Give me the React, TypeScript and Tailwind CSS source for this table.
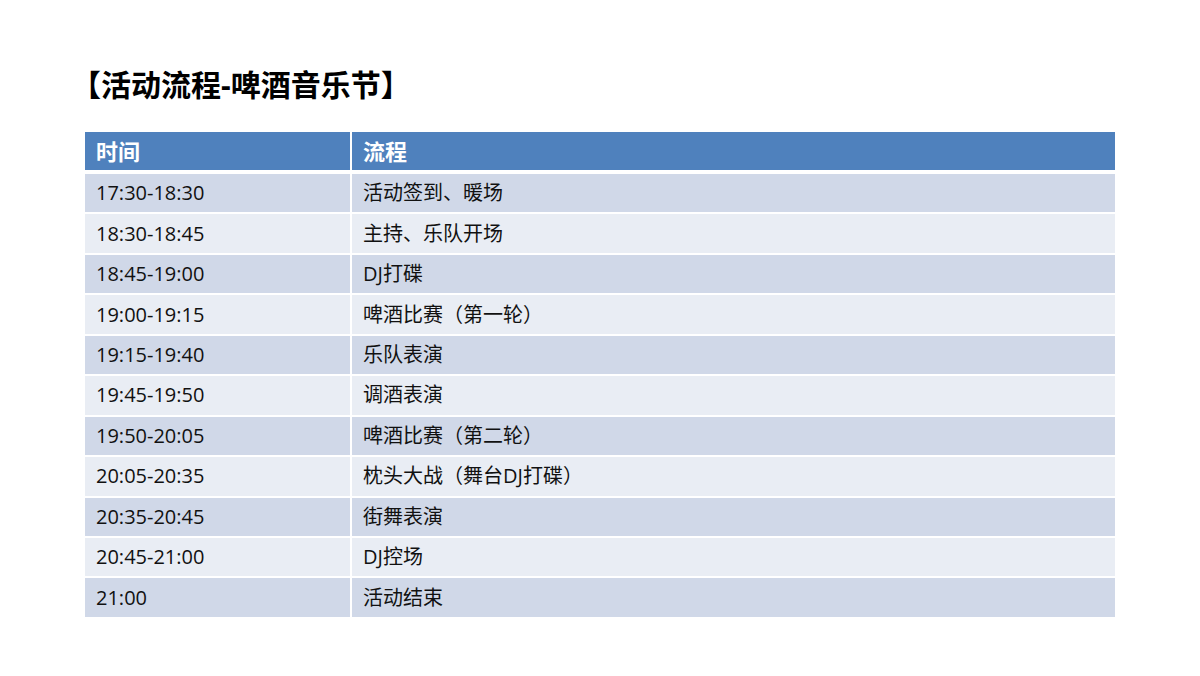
import React from 'react';

const rows: [string, string][] = [
  ['17:30-18:30', '活动签到、暖场'],
  ['18:30-18:45', '主持、乐队开场'],
  ['18:45-19:00', 'DJ打碟'],
  ['19:00-19:15', '啤酒比赛（第一轮）'],
  ['19:15-19:40', '乐队表演'],
  ['19:45-19:50', '调酒表演'],
  ['19:50-20:05', '啤酒比赛（第二轮）'],
  ['20:05-20:35', '枕头大战（舞台DJ打碟）'],
  ['20:35-20:45', '街舞表演'],
  ['20:45-21:00', 'DJ控场'],
  ['21:00', '活动结束'],
];

export default function App() {
  return (
    <div
      className="w-[1200px] h-[676px] bg-white pl-[71px] pt-[62px]"
      style={{ fontFamily: '"Open Sans", "Noto Sans CJK SC", sans-serif' }}
    >
      <h1 className="text-[30px] leading-[46px] font-bold text-black">【活动流程-啤酒音乐节】</h1>

      <div className="ml-[14px] mt-[24px] w-[1030px] flex flex-col">
        <div className="flex gap-[2px] h-[38px] text-white text-[22px] font-bold">
          <div className="w-[265px] bg-[#4f81bd] pl-[11px] flex items-center">时间</div>
          <div className="flex-1 bg-[#4f81bd] pl-[11px] flex items-center">流程</div>
        </div>
        <div className="flex flex-col gap-[2px] mt-[4px]">
          {rows.map(([time, item], i) => (
            <div key={i} className="flex gap-[2px] h-[38.45px] text-[20px] text-[#111]">
              <div className={`w-[265px] pl-[11px] flex items-center ${i % 2 === 0 ? 'bg-[#d0d8e8]' : 'bg-[#e9edf4]'}`}>{time}</div>
              <div className={`flex-1 pl-[11px] flex items-center ${i % 2 === 0 ? 'bg-[#d0d8e8]' : 'bg-[#e9edf4]'}`}>{item}</div>
            </div>
          ))}
        </div>
      </div>
    </div>
  );
}
